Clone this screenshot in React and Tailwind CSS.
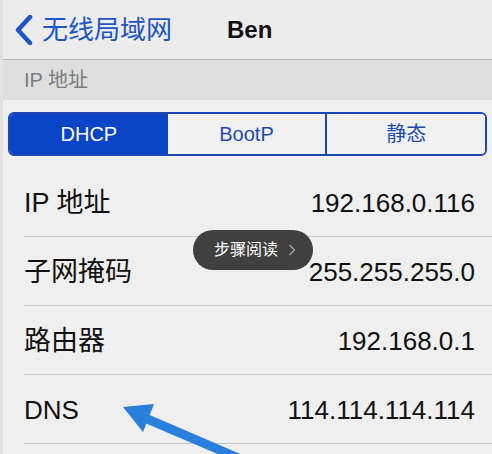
import React from "react";

const F = { fontFamily: '"Liberation Sans", "Noto Sans CJK SC", sans-serif' };

function Row({ label, value, cjk }) {
  return (
    <div className="flex h-[69px] items-center border-b border-[#c8c8c8] ml-[21px] pr-[17px]">
      <div className={`flex-1 pt-[2px] text-[#111] ${cjk ? "text-[27px]" : "text-[26px]"}`}>{label}</div>
      <div className="pt-[2px] text-[26px] text-[#111]">{value}</div>
    </div>
  );
}

export default function App() {
  return (
    <div className="relative w-[492px] h-[454px] overflow-hidden bg-[#efefef] border-l-[3px] border-[#e2e2e2]" style={F}>
      {/* nav */}
      <div className="flex h-[60px] items-center bg-[#ececec] border-b border-[#b9b9b9]">
        <svg width="22" height="30" viewBox="0 0 22 30" className="ml-[10px] mr-[7px]">
          <path d="M17 2 L5 15 L17 28" fill="none" stroke="#1d55c6" strokeWidth="4.5" strokeLinecap="round" strokeLinejoin="round" />
        </svg>
        <span className="text-[26px] text-[#1d55c6] leading-none">无线局域网</span>
        <span className="ml-[55px] text-[24px] font-bold text-[#111] leading-none">Ben</span>
      </div>
      {/* section header */}
      <div className="flex h-[40px] items-center bg-[#dedede] pl-[21px] text-[20px] text-[#7c7c7c]">IP 地址</div>
      {/* segmented */}
      <div className="px-[5px] pt-[12px] pb-[12px]">
        <div className="flex h-[44px] rounded-[6px] border-2 border-[#1d46b0] overflow-hidden text-[20px]">
          <div className="flex flex-1 items-center justify-center bg-[#0a45c8] text-white">DHCP</div>
          <div className="flex flex-1 items-center justify-center border-r-2 border-[#1d46b0] bg-[#f1f1f1] text-[#1d4ab0]">BootP</div>
          <div className="flex flex-1 items-center justify-center bg-[#f1f1f1] text-[#1d4ab0]">静态</div>
        </div>
      </div>
      {/* rows */}
      <div>
        <Row label="IP 地址" value="192.168.0.116" cjk />
        <Row label="子网掩码" value="255.255.255.0" cjk />
        <Row label="路由器" value="192.168.0.1" cjk />
        <Row label="DNS" value="114.114.114.114" />
      </div>
      {/* toast */}
      <div className="absolute left-[190px] top-[230px] flex h-[40px] w-[120px] items-center rounded-full bg-[#404040] pl-[21px]">
        <span className="text-[16px] text-white">步骤阅读</span>
        <svg width="8" height="12" viewBox="0 0 8 12" className="ml-[10px]">
          <path d="M1.5 1 L6.5 6 L1.5 11" fill="none" stroke="#a8a8a8" strokeWidth="1.2" />
        </svg>
      </div>
      {/* arrow */}
      <svg className="absolute left-0 top-0" width="492" height="454" viewBox="0 0 492 454">
        <path d="M240 460 L142 418" stroke="#2a7edc" strokeWidth="9" strokeLinecap="butt" />
        <path d="M120 407 L151 404 L140 432 Z" fill="#2a7edc" />
      </svg>
    </div>
  );
}
